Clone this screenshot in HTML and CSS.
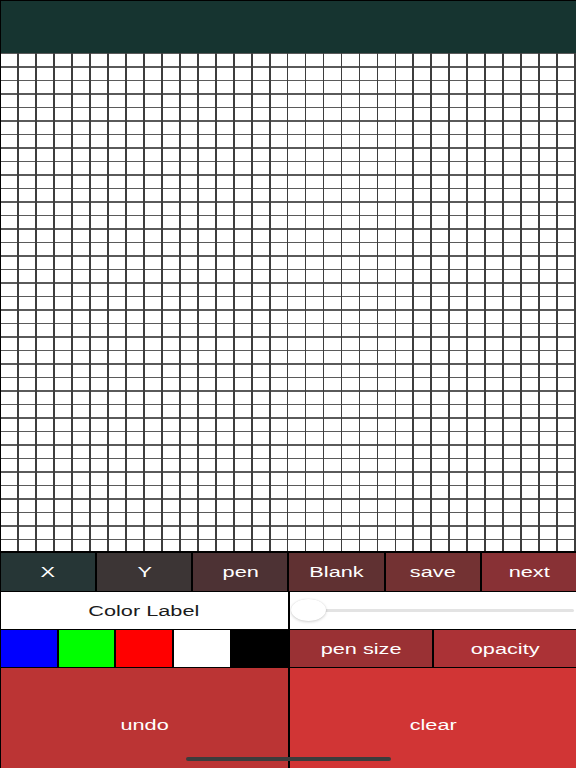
FILE: index.html
```html
<!DOCTYPE html>
<html>
<head>
<meta charset="utf-8">
<title>Pixel Draw</title>
<link rel="stylesheet" href="styles.css">
</head>
<body>
<div class="app">
  <div class="header"></div>
  <div class="canvas"></div>
  <div class="tools">
    <div class="btn t1"><span class="lbl">X</span></div>
    <div class="btn t2"><span class="lbl">Y</span></div>
    <div class="btn t3"><span class="lbl">pen</span></div>
    <div class="btn t4"><span class="lbl">Blank</span></div>
    <div class="btn t5"><span class="lbl">save</span></div>
    <div class="btn t6"><span class="lbl">next</span></div>
  </div>
  <div class="row">
    <div class="color-label"><span class="lbl">Color Label</span></div>
    <div class="slider">
      <div class="track"></div>
      <div class="thumb"></div>
    </div>
  </div>
  <div class="row">
    <div class="swatches">
      <div class="sw blue"></div>
      <div class="sw green"></div>
      <div class="sw red"></div>
      <div class="sw white"></div>
      <div class="sw black"></div>
    </div>
    <div class="pair">
      <div class="btn pensize"><span class="lbl">pen size</span></div>
      <div class="btn opacity"><span class="lbl">opacity</span></div>
    </div>
  </div>
  <div class="row big">
    <div class="btn undo"><span class="lbl">undo</span></div>
    <div class="btn clear"><span class="lbl">clear</span></div>
  </div>
  <div class="home"></div>
</div>
</body>
</html>
```

FILE: styles.css
```css
html, body {
  margin: 0;
  padding: 0;
  background: #000;
}

.app {
  position: relative;
  width: 576px;
  height: 768px;
  box-sizing: border-box;
  padding: 1px 0 0 1px;
  background: #000;
  display: flex;
  flex-direction: column;
  font-family: "Liberation Sans", Arial, sans-serif;
  overflow: hidden;
}

.header {
  height: 52px;
  flex: none;
  background: #163430;
}

.canvas {
  height: 498px;
  flex: none;
  background-color: #fff;
  background-image:
    repeating-linear-gradient(to right, transparent 0, transparent 16.17px, #3e3e3e 16.17px, #3e3e3e 17.96875px),
    repeating-linear-gradient(to bottom, #5a5a5a 0, #5a5a5a 1.4px, transparent 1.4px, transparent 13.5px);
}

.tools {
  margin-top: 2px;
  height: 38px;
  flex: none;
  display: grid;
  grid-template-columns: repeat(6, 1fr);
  gap: 2px;
}

.btn {
  display: flex;
  align-items: center;
  justify-content: center;
  color: #fff;
  font-size: 14px;
  min-width: 0;
}

.lbl {
  display: inline-block;
  transform: scaleX(1.55);
  white-space: nowrap;
}

.t1 { background: #263636; }
.t2 { background: #3c3535; }
.t3 { background: #4d3234; }
.t4 { background: #603132; }
.t5 { background: #733233; }
.t6 { background: #883135; }

.row {
  margin-top: 1px;
  height: 37px;
  flex: none;
  display: grid;
  grid-template-columns: 1fr 1fr;
  gap: 2px;
}

.color-label {
  background: #fff;
  display: flex;
  align-items: center;
  justify-content: center;
  color: #1a1a1a;
  font-size: 14px;
  min-width: 0;
}

.slider {
  position: relative;
  background: #fff;
  display: flex;
  align-items: center;
  padding: 0 2px 0 18px;
  min-width: 0;
}

.track {
  flex: 1;
  height: 3px;
  border-radius: 2px;
  background: #e3e3e3;
}

.thumb {
  position: absolute;
  left: 1px;
  top: 7px;
  width: 35px;
  height: 22px;
  border-radius: 50%;
  background: #fff;
  box-shadow: 0 1px 3px rgba(0, 0, 0, 0.18), 0 0 1px rgba(0, 0, 0, 0.12);
}

.swatches {
  display: grid;
  grid-template-columns: repeat(5, 1fr);
  gap: 2px;
  min-width: 0;
}

.blue { background: #0000ff; }
.green { background: #00ff00; }
.red { background: #ff0000; }
.white { background: #ffffff; }
.black { background: #000000; }

.pair {
  display: grid;
  grid-template-columns: 1fr 1fr;
  gap: 2px;
  min-width: 0;
}

.pensize { background: #9a3134; }
.opacity { background: #ab3236; }

.big {
  height: 100px;
}

.big .btn {
  padding-top: 14px;
}

.undo { background: #bb3434; }
.clear { background: #d13535; }

.home {
  position: absolute;
  left: 186px;
  top: 757px;
  width: 205px;
  height: 4px;
  border-radius: 2px;
  background: #3c3c3c;
}
```
